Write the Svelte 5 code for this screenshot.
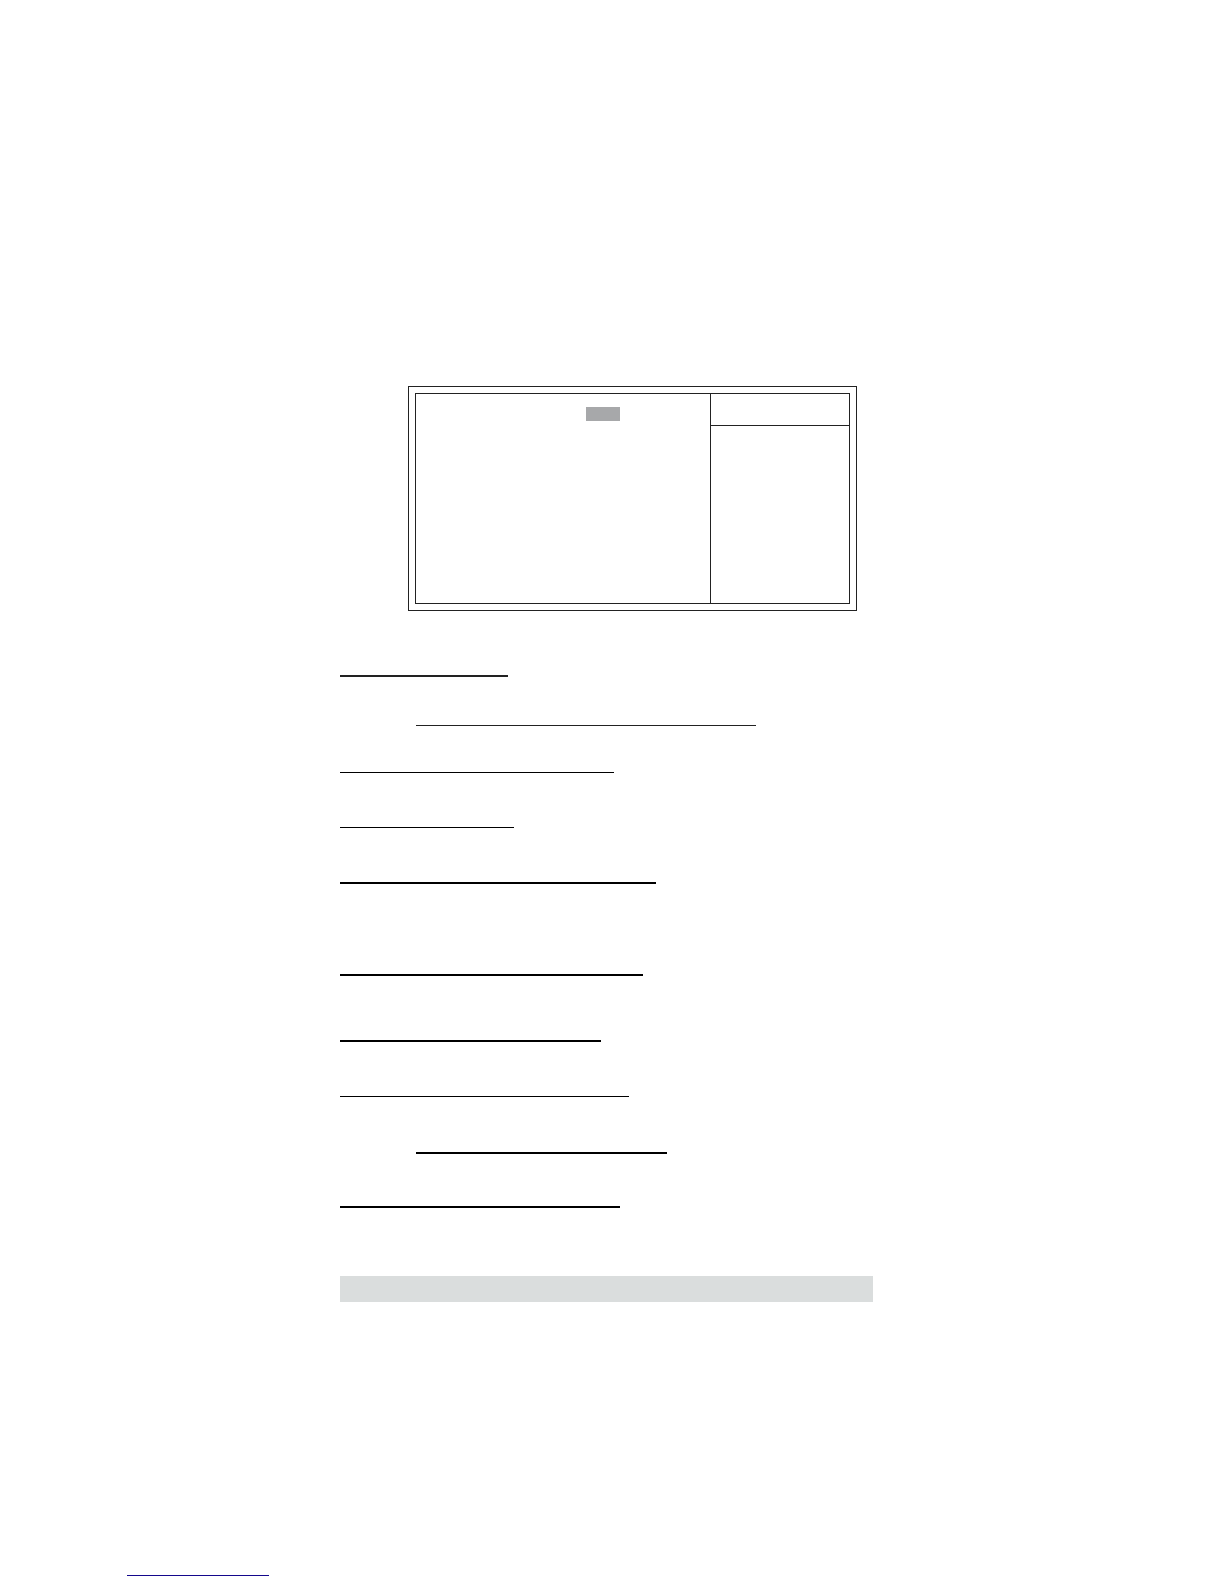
<script lang="ts">
  // space is the blank room above each rule
  const rules = [
    { width: 168, space: 64, thick: true, soft: true },
    { width: 340, space: 48, indent: true, soft: true },
    { width: 274, space: 46 },
    { width: 174, space: 54 },
    { width: 316, space: 54, thick: true },
    { width: 303, space: 90, thick: true },
    { width: 261, space: 64, thick: true },
    { width: 289, space: 54 },
    { width: 251, space: 55, thick: true, indent: true },
    { width: 280, space: 52, thick: true },
  ];
</script>

<div class="page">
  <main>
    <section class="panel">
      <div class="screen">
        <div class="options">
          <div class="selected"></div>
        </div>
        <div class="help">
          <div class="help-title"></div>
        </div>
      </div>
    </section>

    {#each rules as rule}
      <div
        class="rule"
        class:thick={rule.thick}
        class:indent={rule.indent}
        class:soft={rule.soft}
        style="width: {rule.width}px; margin-top: {rule.space}px"
      ></div>
    {/each}

    <div class="notice"></div>
  </main>

  <footer>
    <div class="link-line"></div>
  </footer>
</div>

<style>
  :global(body) {
    background: #fff;
    font-family: "Liberation Sans", Arial, sans-serif;
  }

  .page {
    padding: 386px 0 8px;
  }

  main {
    margin: 0 351px 0 340px;
  }

  .panel {
    margin: 0 16px 0 68px;
    padding: 6px;
    border: 1px solid #222;
  }

  .screen {
    display: grid;
    grid-template-columns: 294fr 139fr;
    min-height: 209px;
    border: 1px solid #222;
  }

  .options {
    padding: 13px 0 0 170px;
  }

  .selected {
    width: 34px;
    height: 14px;
    background: #a7a8aa;
  }

  .help {
    border-left: 1px solid #222;
  }

  .help-title {
    height: 31px;
    border-bottom: 1px solid #222;
  }

  .rule {
    height: 1px;
    background: #000;
  }

  .rule.thick {
    height: 2px;
  }

  .rule.indent {
    margin-left: 76px;
  }

  .rule.soft {
    background: #222;
  }

  .notice {
    height: 26px;
    margin-top: 68px;
    background: #dadddd;
  }

  footer {
    margin: 273px 0 0 127px;
  }

  .link-line {
    width: 142px;
    height: 1px;
    background: #14088c;
  }
</style>
